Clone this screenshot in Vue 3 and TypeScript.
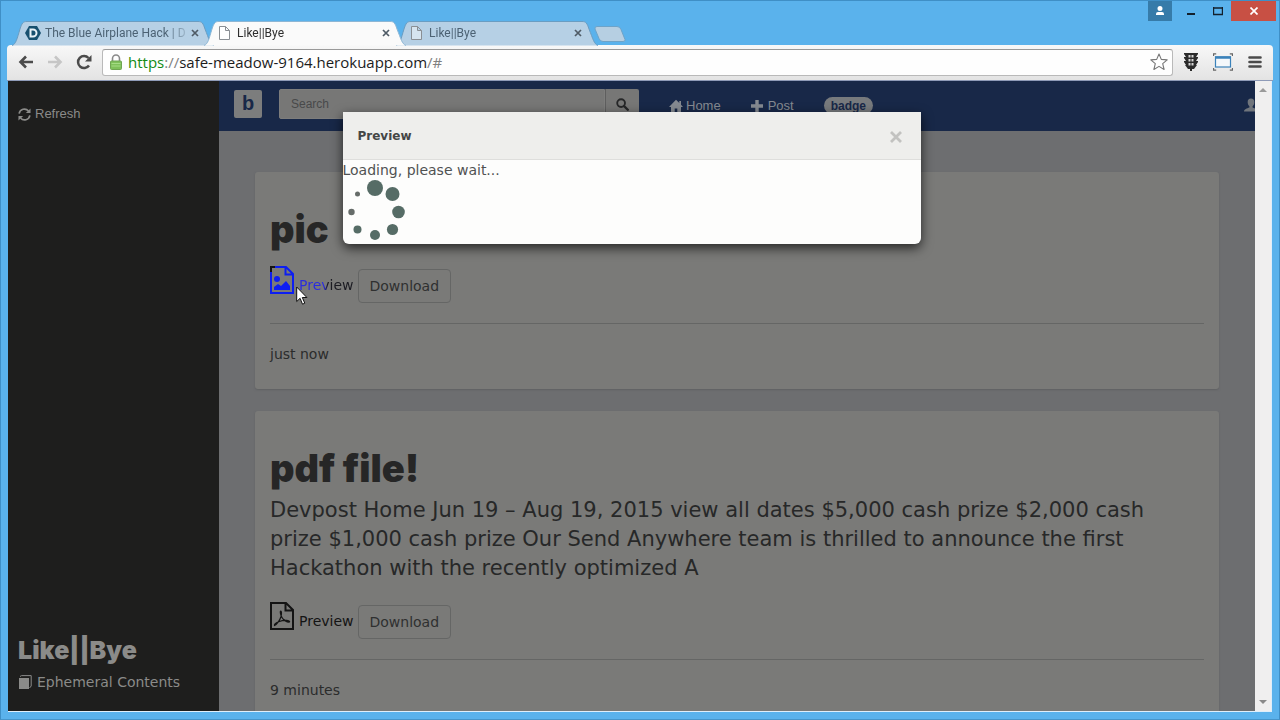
<script setup lang="ts">
import { ref } from 'vue'

interface Tab { title: string; icon: 'devpost' | 'page'; active: boolean }
interface Post { title: string; body: string; kind: 'image' | 'pdf'; hot: boolean; age: string }

const tabs: Tab[] = [
  { title: 'The Blue Airplane Hack | D', icon: 'devpost', active: false },
  { title: 'Like||Bye', icon: 'page', active: true },
  { title: 'Like||Bye', icon: 'page', active: false },
]

const posts: Post[] = [
  { title: 'pic', body: '', kind: 'image', hot: true, age: 'just now' },
  {
    title: 'pdf file!',
    body: 'Devpost Home Jun 19 – Aug 19, 2015 view all dates $5,000 cash prize $2,000 cash prize $1,000 cash prize Our Send Anywhere team is thrilled to announce the first Hackathon with the recently optimized A',
    kind: 'pdf', hot: false, age: '9 minutes',
  },
]

const dots = [
  { x: 32, y: 8, r: 8 }, { x: 49.5, y: 14, r: 7 }, { x: 55.5, y: 32, r: 6.3 }, { x: 49.5, y: 49.5, r: 5.6 },
  { x: 32, y: 55, r: 5 }, { x: 14.5, y: 49.5, r: 4 }, { x: 8.5, y: 32, r: 3.2 }, { x: 14.5, y: 14, r: 2.5 },
]

const query = ref('')
</script>

<template>
  <div class="window">
    <header class="titlebar">
      <nav class="tabs" aria-label="Tabs">
        <div v-for="(t, i) in tabs" :key="i" class="tab" :class="{ active: t.active }">
          <svg class="tab-shape" viewBox="0 0 202 25" aria-hidden="true">
            <path d="M0 24.5 C4 23 5 18 8 8 C10 2 11 .5 15 .5 H186 C190 .5 191 2 193 8 C197 18 198 23 202 24.5" />
          </svg>
          <svg v-if="t.icon === 'devpost'" class="fav" viewBox="0 0 16 16" aria-hidden="true">
            <path d="M4 1h8l4 7-4 7H4L0 8z" fill="#17506f" />
            <path d="M5.500 4.500H8a3.500 3.500 0 0 1 0 7H5.500z" fill="none" stroke="#e8f1f7" stroke-width="2" />
          </svg>
          <svg v-else class="fav" viewBox="0 0 16 16" aria-hidden="true">
            <path d="M2.500 1.500h6l4 4v9h-10z M8.500 1.500v4h4" :fill="t.active ? '#fff' : '#d6e4ef'" stroke="#8a8f94" />
          </svg>
          <a href="#" class="tab-title">{{ t.title }}</a>
          <button class="tab-close" aria-label="Close tab">
            <svg viewBox="0 0 8 8" width="8" height="8"><path d="M1 1l6 6M7 1L1 7" stroke="#4f5b66" stroke-width="1.700" /></svg>
          </button>
        </div>
        <button class="new-tab" aria-label="New tab">
          <svg viewBox="0 0 32 16" width="32" height="16"><path d="M3 .5h20q3 0 4 3l4 10q.5 2-2 2H9q-3 0-4-3L1 3Q.5.5 3 .5z" fill="#b6cfe2" stroke="#6ea3c8" /></svg>
        </button>
      </nav>
      <div class="controls">
        <button class="who" aria-label="User">
          <svg viewBox="0 0 24 20" width="24" height="20"><path d="M12 5a2.500 2.500 0 0 1 0 5 2.500 2.500 0 0 1 0-5zM8 14v-1q0-2 2-2h4q2 0 2 2v1z" fill="#fff" /></svg>
        </button>
        <button class="min" aria-label="Minimize"><svg viewBox="0 0 10 10" width="10" height="10"><path d="M1 8h8" stroke="#13202c" stroke-width="2" /></svg></button>
        <button class="max" aria-label="Maximize"><svg viewBox="0 0 10 10" width="10" height="10"><path d="M.5 2h9M.5 1v7.500h9V1" stroke="#13202c" fill="none" stroke-width="1.400" /></svg></button>
        <button class="close" aria-label="Close"><svg viewBox="0 0 8 8" width="8" height="8"><path d="M.5.5l7 7M7.500.5l-7 7" stroke="#fff" stroke-width="1.700" /></svg></button>
      </div>
    </header>

    <div class="toolbar">
      <button class="tool" aria-label="Back"><svg viewBox="0 0 16 14" width="16" height="14"><path d="M15 7H3M8 1.500L2.500 7 8 12.500" fill="none" stroke="#4b4b4b" stroke-width="2.600" /></svg></button>
      <button class="tool" aria-label="Forward"><svg viewBox="0 0 16 14" width="16" height="14"><path d="M1 7h12M8 1.500L13.500 7 8 12.500" fill="none" stroke="#c6c6c6" stroke-width="2.600" /></svg></button>
      <button class="tool" aria-label="Reload"><svg viewBox="0 0 16 16" width="16" height="16"><path d="M13 11.500A6 6 0 1 1 12.500 4" fill="none" stroke="#4b4b4b" stroke-width="2.500" /><path d="M15.500 1v6.500H9z" fill="#4b4b4b" /></svg></button>
      <div class="omnibox">
        <svg viewBox="0 0 12 16" width="12" height="16" aria-hidden="true">
          <path d="M2.500 8V4.500a3.500 3.500 0 0 1 7 0V8" fill="none" stroke="#8a8a8a" stroke-width="1.600" />
          <rect x=".5" y="7" width="11" height="8.500" rx="1" fill="#7fc15a" stroke="#6fa552" />
          <path d="M1.500 9.500h9M1.500 12h9" stroke="#a5dc85" />
        </svg>
        <div class="url"><span class="secure">https</span><span class="dim">://</span>safe-meadow-9164.herokuapp.com<span class="dim">/#</span></div>
        <button class="star" aria-label="Bookmark"><svg viewBox="0 0 18 18" width="18" height="18"><path d="M9 1l2.300 5.400 5.900.5-4.500 3.800 1.400 5.800L9 13.400l-5.100 3.100 1.400-5.800L.8 6.900l5.900-.5z" fill="#fff" stroke="#777" stroke-width="1.100" stroke-linejoin="round" /></svg></button>
      </div>
      <button class="ext first" aria-label="Traffic extension">
        <svg viewBox="0 0 16 20" width="16" height="20"><path d="M1 1h14v1l-2 3h2v1l-2 3h2v1l-2 3h1l-3 4H9v2H7v-2H5l-3-4h1l-2-3V9h2L1 6V5h2L1 2z" fill="#2b2b2b" /><path d="M5.500 3h2v2.500h-2zM8.500 3h2v2.500h-2zM5.500 7h2v2.500h-2zM8.500 7h2v2.500h-2zM5.500 11h2v2.500h-2zM8.500 11h2v2.500h-2z" fill="#d8d8d8" /></svg>
      </button>
      <button class="ext" aria-label="Window resizer">
        <svg viewBox="0 0 20 18" width="20" height="18"><rect x="2.500" y="4" width="15" height="10" fill="#f4f8fb" stroke="#3b82ba" stroke-width="1.200" /><path d="M2 4.500h16" stroke="#3b82ba" stroke-width="2.500" /><path d="M.5 3V.8h2.700M19.500 3V.8h-2.700M.5 15v2.200h2.700M19.500 15v2.200h-2.700" fill="none" stroke="#666" stroke-width="1.300" /></svg>
      </button>
      <button class="ext menu" aria-label="Menu">
        <svg viewBox="0 0 14 14" width="14" height="14"><path d="M1.500 2.500h11M1.500 7h11M1.500 11.500h11" stroke="#4b4b4b" stroke-width="2.600" stroke-linecap="round" /></svg>
      </button>
    </div>

    <div class="viewport">
      <div class="page">
        <aside class="sidebar">
          <a href="#" class="refresh">
            <svg viewBox="0 0 14 14" width="13" height="13" aria-hidden="true"><path d="M1.200 6A5.800 5.800 0 0 1 11.300 3.200M12.800 8A5.800 5.800 0 0 1 2.700 10.800" fill="none" stroke="currentColor" stroke-width="1.800" /><path d="M13.500.5v5H8.500zM.5 13.500v-5h5z" fill="currentColor" /></svg>
            Refresh
          </a>
          <div class="brand">
            <h2>Like||Bye</h2>
            <p>
              <svg viewBox="0 0 14 14" width="14" height="14" aria-hidden="true"><path d="M1 3h10v11H1z" fill="currentColor" /><path d="M2 1.500L3.500.6h9.700V11l-1.700 2" fill="none" stroke="currentColor" /></svg>
              Ephemeral Contents
            </p>
          </div>
        </aside>
        <div class="main">
          <nav class="navbar">
            <a href="#" class="logo">b</a>
            <form class="search" @submit.prevent>
              <input v-model="query" type="text" placeholder="Search" aria-label="Search" />
              <button aria-label="Submit search"><svg viewBox="0 0 14 14" width="13" height="13"><circle cx="5.500" cy="5.500" r="4.200" fill="none" stroke="#262728" stroke-width="2" /><path d="M8.700 8.700l4 4" stroke="#262728" stroke-width="2.500" stroke-linecap="round" /></svg></button>
            </form>
            <div class="links">
              <a href="#" class="home"><svg viewBox="0 0 14 14" width="14" height="14" aria-hidden="true"><path d="M7 .8L0 8h2v5.500h3.700V9.500h2.600v4H12V8h2l-2-2.200V2h-1.700v2z" fill="currentColor" /></svg>Home</a>
              <a href="#" class="post"><svg viewBox="0 0 12 12" width="12" height="12" aria-hidden="true"><path d="M4.300 0h3.400v4.300H12v3.400H7.700V12H4.300V7.700H0V4.300h4.300z" fill="currentColor" /></svg>Post</a>
              <a href="#" class="badge">badge</a>
            </div>
            <a href="#" class="user" aria-label="Account"><svg viewBox="0 0 14 14" width="14" height="14"><path d="M7 .5C9.500.5 10.500 2 10.300 4.500 10.200 6.300 9.500 7.500 8.600 8.300V9.500C11 10.500 14 11 14 13.500H0C0 11 3 10.500 5.400 9.500V8.300C4.500 7.500 3.800 6.300 3.700 4.500 3.500 2 4.500.5 7 .5z" fill="currentColor" /></svg></a>
          </nav>
          <main class="feed">
            <article v-for="p in posts" :key="p.title" class="card">
              <h1>{{ p.title }}</h1>
              <p v-if="p.body" class="lead">{{ p.body }}</p>
              <div class="row">
                <a href="#" class="preview" :class="{ hot: p.hot }">
                  <svg viewBox="0 0 24 28" width="24" height="28" aria-hidden="true">
                    <path d="M1 1h15l7 7v19H1zM15.500 1v7.500H23" fill="none" stroke="currentColor" stroke-width="2" />
                    <template v-if="p.kind === 'image'">
                      <circle cx="7" cy="13" r="3" fill="currentColor" />
                      <path d="M4 24v-3l4-3 3 2 5-5 4 5v4z" fill="currentColor" />
                      <path d="M0 6V0h5v2H2v4z" fill="#151515" />
                    </template>
                    <path v-else d="M4.500 23.500C7 22.500 10 18 11 14.500 11.800 11 11.500 9 10.800 9 9.800 9 10.500 13 12 15.500 13.500 18 17 20.500 19.500 20 20.500 18.500 14 17.500 9.500 19.500 6.500 20.500 4 22 4.500 23.500z" fill="none" stroke="currentColor" stroke-width="1.200" />
                  </svg>
                  <span>Preview</span>
                </a>
                <button class="download">Download</button>
                <svg v-if="p.hot" class="cursor" viewBox="0 0 12 20" width="12" height="20" aria-hidden="true"><path d="M.7 1v14.500l3.400-3.200 2.400 5.900 2.300-1-2.500-5.700h4.600z" fill="#fff" stroke="#111" /></svg>
              </div>
              <hr />
              <p class="age">{{ p.age }}</p>
            </article>
          </main>
        </div>
        <div class="layer">
          <section class="modal" role="dialog" aria-labelledby="dlg">
            <header><h3 id="dlg">Preview</h3><button aria-label="Close dialog"><svg viewBox="0 0 12 12" width="12" height="12"><path d="M1 1l10 10M11 1L1 11" stroke="#c2c2c0" stroke-width="2.800" /></svg></button></header>
            <p>Loading, please wait...</p>
            <svg class="spinner" viewBox="0 0 64 64" width="64" height="64" aria-hidden="true">
              <circle v-for="(d, i) in dots" :key="i" :cx="d.x" :cy="d.y" :r="d.r" :fill="i > 5 ? '#666c69' : '#566c66'" />
            </svg>
          </section>
        </div>
      </div>
      <div class="scrollbar" aria-hidden="true">
        <svg viewBox="0 0 8 4" width="8" height="4"><path d="M0 4l4-4 4 4z" fill="#9a9a9a" /></svg>
        <svg viewBox="0 0 8 4" width="8" height="4"><path d="M0 0h8L4 4z" fill="#8a8a8a" /></svg>
      </div>
    </div>
  </div>
</template>

<style>
body { margin: 0; overflow: hidden; }
</style>

<style scoped>
* { box-sizing: border-box; }
a { color: inherit; text-decoration: none; }
button { border: 0; padding: 0; margin: 0; background: none; font: inherit; color: inherit; display: flex; align-items: center; justify-content: center; }
svg { display: block; flex: none; }
h1, h2, h3, p { margin: 0; }

.window { height: 100vh; display: flex; flex-direction: column; padding: 0 7px 7px; background: #5ab2ec; border: 1px solid #3f8fc6; border-bottom-color: #4795ca; font-family: "DejaVu Sans", Verdana, sans-serif; }
.titlebar { display: flex; justify-content: space-between; height: 44px; flex: none; }
.tabs { display: flex; align-items: flex-end; padding-left: 4px; font: 12px/16px Roboto, "Open Sans", sans-serif; }
.tab { position: relative; width: 202px; height: 24px; margin-right: -10px; padding: 0 12px 0 13px; display: flex; align-items: center; color: #4c6274; }
.tab-shape { position: absolute; left: 0; top: 0; width: 202px; height: 25px; fill: #b6d0e5; stroke: #6a9dc2; }
.tab.active { z-index: 2; color: #2e2e2e; }
.tab.active .tab-shape { fill: #fafafa; stroke: #8db6d4; }
.fav { position: relative; width: 16px; height: 16px; margin-right: 4px; }
.tab-title { position: relative; flex: 1; white-space: nowrap; mask-image: linear-gradient(90deg, #000 120px, rgba(0, 0, 0, .2) 142px); }
.tab-close { position: relative; width: 16px; height: 16px; margin-left: 2px; }
.new-tab { align-self: flex-end; margin: 0 0 3px 6px; }
.controls { display: flex; align-items: flex-start; margin-right: -4px; }
.who { width: 24px; height: 20px; background: #367ba9; margin-right: 14px; }
.min { width: 10px; height: 20px; margin-right: 17px; }
.max { width: 10px; height: 20px; margin-right: 8px; }
.close { width: 45px; height: 20px; background: #c85044; }

.toolbar { display: flex; align-items: center; height: 36px; flex: none; padding: 0 11px 1px; margin: 0 -1px; border-radius: 4px 4px 0 0; background: linear-gradient(#f8f8f8, #e3e3e3); border-bottom: 1px solid #8f9bb8; }
.tool { width: 16px; height: 20px; margin-right: 13px; }
.tool:nth-child(3) { margin-right: 10px; }
.omnibox { flex: 1; min-width: 0; height: 27px; display: flex; align-items: center; padding: 0 4px 0 7px; background: #fefefe; border: 1px solid #b9b9b9; border-top-color: #999; border-radius: 3px; }
.url { flex: 1; margin-left: 6px; font: 15px/22px "Open Sans", "Noto Sans", sans-serif; color: #1c1c1c; white-space: nowrap; }
.secure { color: #138a13; }
.dim { color: #808080; }
.ext { margin-left: 14px; min-width: 14px; }
.ext.first { margin-left: 10px; }
.ext.menu { margin-left: 15px; }

.viewport { flex: 1; min-height: 0; display: flex; border-bottom: 1px solid #dfeefa; border-right: 1px solid #dfeefa; }
.page { position: relative; flex: 1; min-width: 0; display: flex; overflow: hidden; }
.scrollbar { width: 16px; background: #f0efef; display: flex; flex-direction: column; align-items: center; justify-content: space-between; padding: 7px 0; }

.sidebar { width: 211px; flex: none; display: flex; flex-direction: column; justify-content: space-between; padding: 24px 10px 19px; background: #1e1e1d; color: #8b8b89; }
.refresh { display: flex; align-items: center; gap: 4px; font: 13px/18px "Liberation Sans", Arial, sans-serif; }
.brand h2 { font: 900 25px/32px Inter, "Arial Black", sans-serif; }
.brand p { display: flex; align-items: center; gap: 5px; margin-top: 6px; font-size: 14px; line-height: 20px; }

.main { flex: 1; min-width: 0; display: flex; flex-direction: column; background: #6d6e70; }
.navbar { position: relative; display: flex; align-items: flex-start; height: 50px; flex: none; padding: 8px 15px 0; background: #182848; color: #858a91; font: 13px/16px "Liberation Sans", Arial, sans-serif; }
.logo { width: 28px; height: 28px; margin-top: 1px; border-radius: 2px; background: #7c7d7d; color: #182848; font: bold 20px/26px "Liberation Sans", Arial, sans-serif; text-align: center; }
.search { display: flex; width: 360px; height: 30px; margin-left: 17px; }
.search input { flex: 1; min-width: 0; padding: 0 11px; border: 1px solid #7d7d7c; border-radius: 2px 0 0 2px; background: #777776; color: #333; font: 12px/16px "Liberation Sans", Arial, sans-serif; }
.search input::placeholder { color: #48494a; opacity: 1; }
.search button { width: 34px; border: 1px solid #5e5e5e; border-width: 0 0 0 1px; border-radius: 0 2px 2px 0; background: #777776; }
.links { display: flex; align-items: center; margin: 8px 0 0 30px; }
.links a { display: flex; align-items: center; }
.home { gap: 3px; }
.post { gap: 5px; margin-left: 30px; }
.links .badge { height: 17px; margin-left: 30px; padding: 0 7px; border-radius: 9px; background: #777a7d; color: #182848; font-weight: bold; font-size: 12px; }
.user { position: absolute; right: -3px; top: 17px; color: #70757c; }

.feed { flex: 1; min-height: 0; overflow: hidden; padding: 41px 36px 0; }
.card { margin-bottom: 22px; padding: 37px 15px 25px; border-radius: 3px; background: #7a7a78; box-shadow: 0 1px 2px #5f6062; color: #2b2c2c; }
h1 { margin-bottom: 8px; font: 900 38px/40px Inter, "Arial Black", sans-serif; color: #262626; }
.lead { margin-bottom: 19px; padding-right: 16px; font-size: 21px; line-height: 29px; color: #272828; }
.row { position: relative; display: flex; align-items: flex-start; margin-top: 17px; padding-top: 8px; }
.preview { display: flex; align-items: flex-start; gap: 5px; margin-top: -8px; color: #141414; font-size: 14px; line-height: 20px; }
.preview span { margin-top: 9px; }
.preview.hot { color: #0d1ef2; }
.preview.hot span { background: linear-gradient(90deg, #2a2be0 45%, #1b1b22 52%); background-clip: text; color: transparent; }
.download { height: 34px; margin: -5px 0 0 4px; padding: 0 11px; border: 1px solid #656665; border-radius: 4px; font-size: 14px; color: #2f3030; }
.cursor { position: absolute; left: 26px; top: 20px; }
hr { height: 1px; margin: 20px 0; border: 0; background: #656665; }
.age { font-size: 14px; line-height: 20px; }

.layer { position: absolute; inset: 0; display: flex; justify-content: center; align-items: flex-start; padding-top: 31px; }
.modal { width: 578px; max-width: 90%; border-radius: 0 0 6px 6px; background: #fdfdfc; box-shadow: 0 4px 12px rgba(0, 0, 0, .7); color: #505252; font-size: 14px; line-height: 20px; }
.modal header { display: flex; justify-content: space-between; align-items: center; height: 48px; padding: 0 19px 0 15px; background: #eeeeec; border-bottom: 1px solid #dededc; }
.modal h3 { font-size: 12px; line-height: 20px; color: #444646; }
.modal header button { margin-top: 3px; }
</style>
